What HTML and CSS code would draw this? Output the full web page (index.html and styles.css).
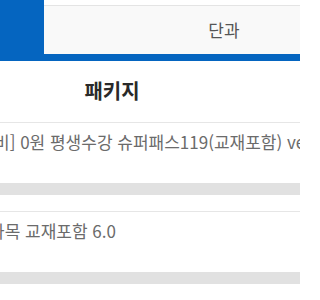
FILE: index.html
```html
<!DOCTYPE html>
<html lang="ko">
<head>
<meta charset="utf-8">
<link rel="stylesheet" href="styles.css">
</head>
<body>
<div class="page">
  <div class="tabs">
    <div class="tab tab-active"></div>
    <div class="tab tab-off">단과</div>
  </div>
  <div class="heading">패키지</div>
  <div class="item">
    <div class="item-text item-text-1">비] 0원 평생수강 슈퍼패스119(교재포함) ver</div>
    <div class="band"></div>
  </div>
  <div class="item">
    <div class="item-text item-text-2">과목 교재포함 6.0</div>
    <div class="band"></div>
  </div>
  <div class="item"></div>
</div>
</body>
</html>
```

FILE: styles.css
```css
html, body {
  margin: 0;
  padding: 0;
  background: #ffffff;
}
body {
  font-family: "Noto Sans CJK KR", "Noto Sans", sans-serif;
  overflow: hidden;
  width: 300px;
  height: 300px;
}
.page {
  width: 300px;
  height: 300px;
  overflow: hidden;
}
.tabs {
  display: flex;
  height: 54px;
  border-bottom: 7px solid #0565c0;
}
.tab {
  flex-shrink: 0;
}
.tab-active {
  width: 44px;
  background: #0565c0;
}
.tab-off {
  width: 360px;
  margin-top: 5px;
  border-top: 1px solid #e4e4e4;
  background: #f9f9f9;
  color: #555555;
  font-size: 17px;
  line-height: 47px;
  text-align: center;
}
.heading {
  width: 224px;
  height: 61px;
  line-height: 60px;
  text-align: center;
  font-size: 20px;
  font-weight: 700;
  color: #2a2a2a;
}
.item {
  border-top: 1px solid #e6e6e6;
  margin-bottom: 16px;
}
.item-text {
  padding-top: 10px;
  padding-bottom: 32px;
  font-size: 17px;
  line-height: 18px;
  color: #6b6b6b;
  white-space: nowrap;
}
.item-text-1 {
  margin-left: -6px;
}
.item-text-2 {
  margin-left: -11px;
}
.band {
  height: 12px;
  background: #e1e1e1;
}
```
